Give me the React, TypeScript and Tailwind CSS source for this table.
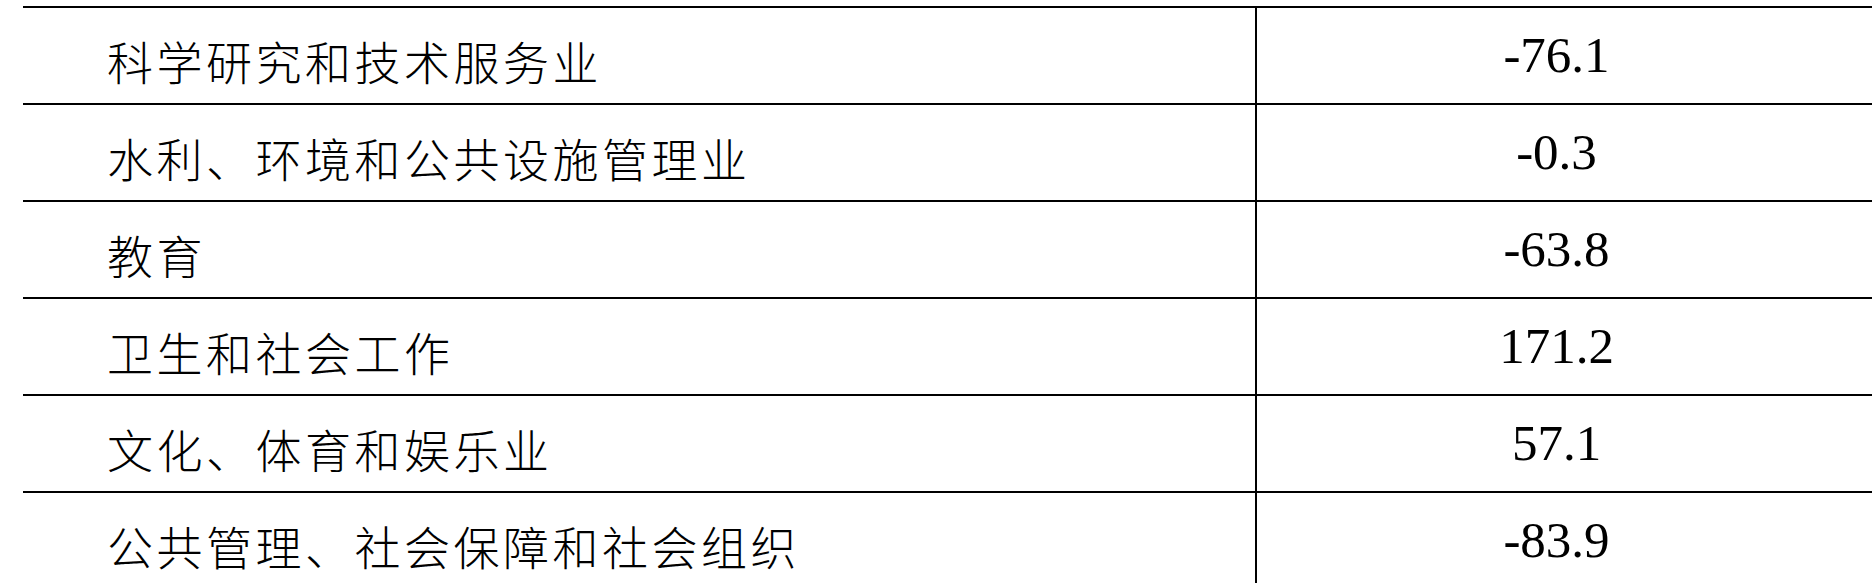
const rows = [
  { name: "科学研究和技术服务业", value: "-76.1" },
  { name: "水利、环境和公共设施管理业", value: "-0.3" },
  { name: "教育", value: "-63.8" },
  { name: "卫生和社会工作", value: "171.2" },
  { name: "文化、体育和娱乐业", value: "57.1" },
  { name: "公共管理、社会保障和社会组织", value: "-83.9" },
];

const App = () => {
  return (
    <div className="w-[1872px] h-[583px] overflow-hidden bg-white pl-[23px] pt-[6px]">
      <div className="flex flex-col">
        {rows.map((row) => (
          <div
            key={row.name}
            className="grid grid-cols-[1232px_1fr] border-t-2 border-black h-[97px]"
          >
            <div
              className="flex items-center pl-[84px] pt-[10px] text-[46px] tracking-[3.5px] font-light text-black"
              style={{ fontFamily: '"Noto Sans CJK SC", sans-serif' }}
            >
              {row.name}
            </div>
            <div
              className="flex items-center justify-center border-l-2 border-black pr-[16px] text-[51px] text-black"
              style={{ fontFamily: '"Liberation Serif", serif' }}
            >
              {row.value}
            </div>
          </div>
        ))}
      </div>
    </div>
  );
};

export default App;
